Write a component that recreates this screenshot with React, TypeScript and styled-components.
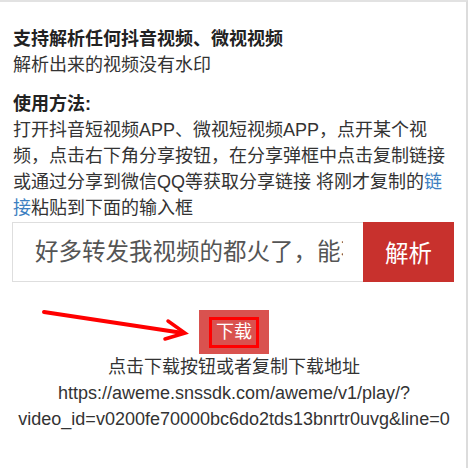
import React from "react";
import styled, { createGlobalStyle } from "styled-components";

const GlobalStyle = createGlobalStyle`
  html, body {
    margin: 0;
    padding: 0;
    background: #ffffff;
  }
  body {
    font-family: "Liberation Sans", "Noto Sans CJK SC", sans-serif;
    color: #333;
  }
`;

const Page = styled.div`
  box-sizing: border-box;
  width: 468px;
  min-height: 468px;
  border-top: 2px solid #e2e2e2;
  border-right: 2px solid #dcdcdc;
  padding: 24px 11px 20px 13px;
  font-size: 18px;
  line-height: 26px;
`;

const Title = styled.div`
  font-weight: 700;
  color: #222;
`;

const Text = styled.div`
  color: #333;
`;

const Heading = styled.div`
  margin-top: 13px;
  font-weight: 700;
  color: #222;
`;

const Link = styled.span`
  color: #3d7fc1;
`;

const SearchRow = styled.div`
  display: flex;
  margin: 1px 1px 0 -1px;
  height: 60px;
`;

const Input = styled.input`
  flex: 1;
  min-width: 0;
  box-sizing: border-box;
  height: 100%;
  border: 1px solid #dedede;
  border-right: none;
  padding: 0 20px 0 22px;
  font-family: "Liberation Sans", "Noto Sans CJK SC", sans-serif;
  font-size: 23.5px;
  color: #444;
  outline: none;
  background: #fff;
  &::placeholder {
    color: #555;
  }
`;

const ParseButton = styled.button`
  width: 91px;
  height: 100%;
  border: none;
  background: #c8312d;
  color: #fff;
  font-family: "Liberation Sans", "Noto Sans CJK SC", sans-serif;
  font-size: 23.5px;
  padding: 0;
`;

const DownloadArea = styled.div`
  position: relative;
  margin-top: 28px;
  display: flex;
  flex-direction: column;
  align-items: center;
  text-align: center;
`;

const DownloadButton = styled.button`
  box-sizing: border-box;
  width: 70px;
  height: 44px;
  padding: 0;
  border: none;
  background: #d9524f;
  color: #fff;
  font-family: "Liberation Sans", "Noto Sans CJK SC", sans-serif;
  font-size: 18px;
  display: flex;
  align-items: center;
  justify-content: center;
`;

const Highlight = styled.span`
  box-sizing: border-box;
  width: 50px;
  height: 31px;
  border: 3px solid #ff0000;
  display: flex;
  align-items: center;
  justify-content: center;
  line-height: 1;
`;

const Arrow = styled.svg`
  position: absolute;
  left: 0;
  top: 0;
  overflow: visible;
  pointer-events: none;
`;

const Note = styled.div`
  color: #333;
`;

const Url = styled.div`
  color: #333;
  margin-top: 0;
`;

export default function App() {
  return (
    <>
      <GlobalStyle />
      <Page>
        <Title>支持解析任何抖音视频、微视视频</Title>
        <Text>解析出来的视频没有水印</Text>
        <Heading>使用方法:</Heading>
        <Text>
          打开抖音短视频APP、微视短视频APP，点开某个视频，点击右下角分享按钮，在分享弹框中点击复制链接或通过分享到微信QQ等获取分享链接 将刚才复制的
          <Link>链接</Link>粘贴到下面的输入框
        </Text>
        <SearchRow>
          <Input placeholder="好多转发我视频的都火了，能不能分享一下" />
          <ParseButton>解析</ParseButton>
        </SearchRow>
        <DownloadArea>
          <Arrow width="180" height="36" viewBox="0 0 180 36">
            <path
              d="M31 2 L170 23"
              stroke="#ff0000"
              strokeWidth="4"
              strokeLinecap="round"
              fill="none"
            />
            <path
              d="M155 11 L172 23 L152 29"
              stroke="#ff0000"
              strokeWidth="3.5"
              strokeLinecap="round"
              strokeLinejoin="miter"
              fill="none"
            />
          </Arrow>
          <DownloadButton>
            <Highlight>下载</Highlight>
          </DownloadButton>
          <Note>点击下载按钮或者复制下载地址</Note>
          <Url>
            https://aweme.snssdk.com/aweme/v1/play/?video_id=v0200fe70000bc6do2tds13bnrtr0uvg&amp;line=0
          </Url>
        </DownloadArea>
      </Page>
    </>
  );
}
